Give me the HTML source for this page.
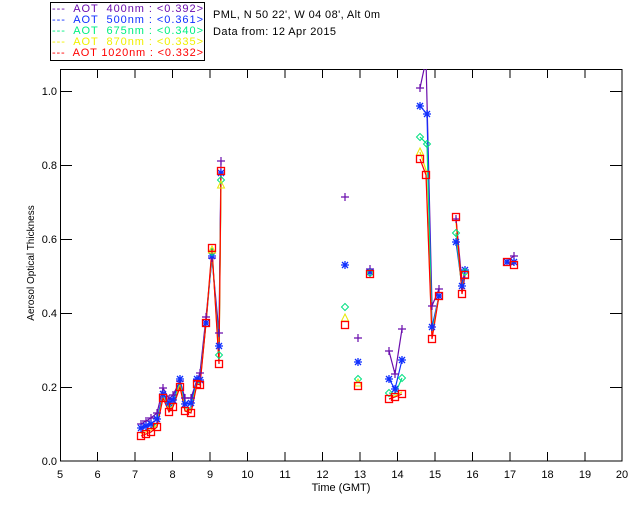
<!DOCTYPE html>
<html><head><meta charset="utf-8"><style>
body{margin:0;background:#fff;}
svg{display:block;font-family:"Liberation Sans",sans-serif;}
</style></head><body>
<svg width="640" height="512" viewBox="0 0 640 512" xmlns="http://www.w3.org/2000/svg">
<defs>
<clipPath id="pc"><rect x="60" y="69" width="562" height="392"/></clipPath>
<g id="mp"><path d="M-4,0H4M0,-4V4" stroke="#6a0dad" stroke-width="1.2" fill="none"/></g>
<g id="mb"><path d="M-4,0H4M0,-4V4M-3,-3L3,3M-3,3L3,-3" stroke="#1030ff" stroke-width="1.3" fill="none"/></g>
<g id="mg"><path d="M0,-3.5L3.5,0L0,3.5L-3.5,0Z" stroke="#00e080" stroke-width="1" fill="none"/></g>
<g id="my"><path d="M0,-4L3.5,3L-3.5,3Z" stroke="#e8e800" stroke-width="1" fill="none"/></g>
<g id="mr"><rect x="-3.5" y="-3.5" width="7" height="7" stroke="#ff0000" stroke-width="1.3" fill="none"/></g>
</defs>
<rect x="50.5" y="2.5" width="154" height="58" fill="none" stroke="#000"/>
<g font-size="11">
<text x="52" y="12" fill="#6a0dad" xml:space="preserve" textLength="151" lengthAdjust="spacing">---  AOT  400nm : &lt;0.392&gt;</text>
<text x="52" y="23" fill="#1030ff" xml:space="preserve" textLength="151" lengthAdjust="spacing">---  AOT  500nm : &lt;0.361&gt;</text>
<text x="52" y="34" fill="#00f080" xml:space="preserve" textLength="151" lengthAdjust="spacing">---  AOT  675nm : &lt;0.340&gt;</text>
<text x="52" y="45" fill="#f0f000" xml:space="preserve" textLength="151" lengthAdjust="spacing">---  AOT  870nm : &lt;0.335&gt;</text>
<text x="52" y="56" fill="#ff0000" xml:space="preserve" textLength="151" lengthAdjust="spacing">---  AOT 1020nm : &lt;0.332&gt;</text>
<text x="213" y="18" fill="#000" textLength="167" lengthAdjust="spacing">PML, N 50 22', W 04 08', Alt 0m</text>
<text x="213" y="35" fill="#000" textLength="123" lengthAdjust="spacing">Data from: 12 Apr 2015</text>
</g>
<rect x="60.5" y="69.5" width="561.5" height="391.5" fill="none" stroke="#000"/>
<g stroke="#000" fill="none">
<path d="M97.5,69v9M135,69v9M172.5,69v9M210,69v9M247.5,69v9M285,69v9M322.5,69v9M360,69v9M397.5,69v9M435,69v9M472.5,69v9M510,69v9M547.5,69v9M585,69v9"/>
<path d="M97.5,461v-9M135,461v-9M172.5,461v-9M210,461v-9M247.5,461v-9M285,461v-9M322.5,461v-9M360,461v-9M397.5,461v-9M435,461v-9M472.5,461v-9M510,461v-9M547.5,461v-9M585,461v-9"/>
<path d="M60,387.5h12M60,313.5h12M60,239.5h12M60,165.5h12M60,91.5h12"/>
<path d="M622,387.5h-12M622,313.5h-12M622,239.5h-12M622,165.5h-12M622,91.5h-12"/>
</g>
<g font-size="11" fill="#000" text-anchor="middle">
<text x="60" y="478">5</text><text x="97.5" y="478">6</text><text x="135" y="478">7</text><text x="172.5" y="478">8</text><text x="210" y="478">9</text><text x="247.5" y="478">10</text><text x="285" y="478">11</text><text x="322.5" y="478">12</text><text x="360" y="478">13</text><text x="397.5" y="478">14</text><text x="435" y="478">15</text><text x="472.5" y="478">16</text><text x="510" y="478">17</text><text x="547.5" y="478">18</text><text x="585" y="478">19</text><text x="622" y="478">20</text>
<text x="341" y="491">Time (GMT)</text>
</g>
<g font-size="11" fill="#000" text-anchor="end">
<text x="57" y="465">0.0</text><text x="57" y="391">0.2</text><text x="57" y="317">0.4</text><text x="57" y="243">0.6</text><text x="57" y="169">0.8</text><text x="57" y="95">1.0</text>
</g>
<text transform="translate(34,263) rotate(-90)" font-size="10" text-anchor="middle" fill="#000">Aerosol Optical Thickness</text>
<g clip-path="url(#pc)" fill="none" stroke-width="1.2">
<g stroke="#6a0dad">
<polyline points="141,424 146,421 151,418 157,413 163,388 169,399 173,395 180,381 185,398 191,398 197,380 200,373 206,317 212,258 219,333 221,161"/>
<polyline points="389,351 395,374 402,329"/>
<polyline points="420,88 426,60 432,306 439,289"/>
<polyline points="456,219 462,282 464,278"/>
<polyline points="507,261 514,256"/>
</g>
<g stroke="#1030ff">
<polyline points="141,428 146,426 151,424 157,419 163,394 169,403 173,400 180,379 185,404 191,403 197,379 200,380 206,323 212,256 219,346 221,173"/>
<polyline points="389,379 395,389 402,360"/>
<polyline points="420,106 427,114 432,327 439,296"/>
<polyline points="456,242 462,286 465,270"/>
<polyline points="507,262 514,262"/>
</g>
<g stroke="#00e080">
<polyline points="141,432 146,430 151,428 157,423 163,396 169,408 173,404 180,383 185,408 191,408 197,382 200,383 206,323 212,252 219,355 221,180"/>
<polyline points="389,393 395,394 402,378"/>
<polyline points="420,137 427,144 432,333 439,296"/>
<polyline points="456,233 462,290 465,272"/>
<polyline points="507,262 514,263"/>
</g>
<g stroke="#e8e800">
<polyline points="141,434 146,432 151,430 157,425 163,397 169,410 173,406 180,385 185,410 191,411 197,383 200,384 206,323 212,250 219,360 221,185"/>
<polyline points="389,396 395,396 402,392"/>
<polyline points="420,152 426,170 432,336 439,296"/>
<polyline points="456,222 462,292 465,274"/>
<polyline points="507,262 514,264"/>
</g>
<g stroke="#ff0000">
<polyline points="141,436 146,434 151,432 157,427 163,398 169,412 173,407 180,387 185,411 191,413 197,384 200,385 206,323 212,248 219,364 221,171"/>
<polyline points="389,399 395,397 402,394"/>
<polyline points="420,159 426,175 432,339 439,296"/>
<polyline points="456,217 462,294 465,275"/>
<polyline points="507,262 514,265"/>
</g>
<g>
<use href="#mp" x="141" y="424"/><use href="#mp" x="146" y="421"/><use href="#mp" x="151" y="418"/><use href="#mp" x="157" y="413"/><use href="#mp" x="163" y="388"/><use href="#mp" x="169" y="399"/><use href="#mp" x="173" y="395"/><use href="#mp" x="180" y="381"/><use href="#mp" x="185" y="398"/><use href="#mp" x="191" y="398"/><use href="#mp" x="197" y="380"/><use href="#mp" x="200" y="373"/><use href="#mp" x="206" y="317"/><use href="#mp" x="212" y="258"/><use href="#mp" x="219" y="333"/><use href="#mp" x="221" y="161"/>
<use href="#mp" x="389" y="351"/><use href="#mp" x="395" y="374"/><use href="#mp" x="402" y="329"/><use href="#mp" x="420" y="88"/><use href="#mp" x="432" y="306"/><use href="#mp" x="439" y="289"/><use href="#mp" x="456" y="219"/><use href="#mp" x="464" y="278"/><use href="#mp" x="514" y="256"/>
<use href="#mp" x="345" y="197"/><use href="#mp" x="358" y="338"/><use href="#mp" x="370" y="269"/>
<use href="#mb" x="141" y="428"/><use href="#mb" x="146" y="426"/><use href="#mb" x="151" y="424"/><use href="#mb" x="157" y="419"/><use href="#mb" x="163" y="394"/><use href="#mb" x="169" y="403"/><use href="#mb" x="173" y="400"/><use href="#mb" x="180" y="379"/><use href="#mb" x="185" y="404"/><use href="#mb" x="191" y="403"/><use href="#mb" x="197" y="379"/><use href="#mb" x="200" y="380"/><use href="#mb" x="206" y="323"/><use href="#mb" x="212" y="256"/><use href="#mb" x="219" y="346"/><use href="#mb" x="221" y="173"/>
<use href="#mb" x="389" y="379"/><use href="#mb" x="395" y="389"/><use href="#mb" x="402" y="360"/><use href="#mb" x="420" y="106"/><use href="#mb" x="427" y="114"/><use href="#mb" x="432" y="327"/><use href="#mb" x="439" y="296"/><use href="#mb" x="456" y="242"/><use href="#mb" x="462" y="286"/><use href="#mb" x="465" y="270"/><use href="#mb" x="507" y="262"/><use href="#mb" x="514" y="262"/>
<use href="#mb" x="345" y="265"/><use href="#mb" x="358" y="362"/><use href="#mb" x="370" y="272"/>
<use href="#mg" x="420" y="137"/><use href="#mg" x="427" y="144"/><use href="#mg" x="456" y="233"/><use href="#mg" x="402" y="378"/><use href="#mg" x="389" y="393"/><use href="#mg" x="465" y="272"/><use href="#mg" x="212" y="252"/><use href="#mg" x="219" y="355"/><use href="#mg" x="221" y="180"/>
<use href="#mg" x="345" y="307" style="stroke:#999"/><use href="#mg" x="358" y="379"/><use href="#mg" x="370" y="273"/>
<use href="#my" x="420" y="152"/><use href="#my" x="345" y="318"/><use href="#my" x="221" y="185"/><use href="#my" x="212" y="250"/><use href="#my" x="358" y="383"/>
<use href="#mr" x="141" y="436"/><use href="#mr" x="146" y="434"/><use href="#mr" x="151" y="432"/><use href="#mr" x="157" y="427"/><use href="#mr" x="163" y="398"/><use href="#mr" x="169" y="412"/><use href="#mr" x="173" y="407"/><use href="#mr" x="180" y="387"/><use href="#mr" x="185" y="411"/><use href="#mr" x="191" y="413"/><use href="#mr" x="197" y="384"/><use href="#mr" x="200" y="385"/><use href="#mr" x="206" y="323"/><use href="#mr" x="212" y="248"/><use href="#mr" x="219" y="364"/><use href="#mr" x="221" y="171"/>
<use href="#mr" x="389" y="399"/><use href="#mr" x="395" y="397"/><use href="#mr" x="402" y="394"/><use href="#mr" x="420" y="159"/><use href="#mr" x="426" y="175"/><use href="#mr" x="432" y="339"/><use href="#mr" x="439" y="296"/><use href="#mr" x="456" y="217"/><use href="#mr" x="462" y="294"/><use href="#mr" x="465" y="275"/><use href="#mr" x="507" y="262"/><use href="#mr" x="514" y="265"/>
<use href="#mr" x="345" y="325"/><use href="#mr" x="358" y="386"/><use href="#mr" x="370" y="274"/>
</g>
</g>
</svg>
</body></html>
